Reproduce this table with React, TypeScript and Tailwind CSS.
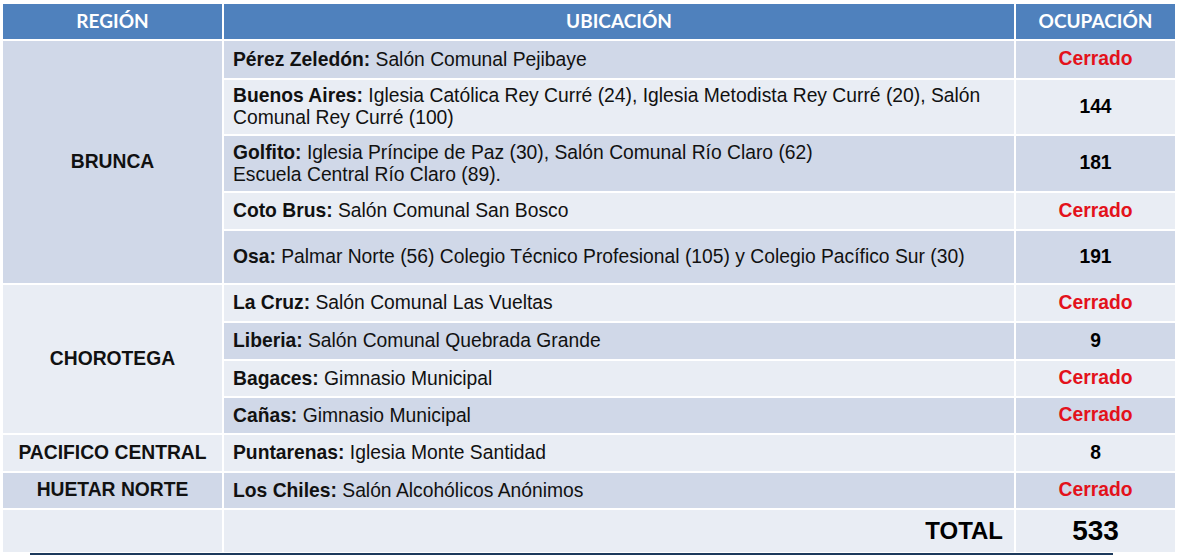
import React from 'react';

type Row = { label: string; text: string; text2?: string; value: string; h: string };

const rows: Row[] = [
  { label: 'Pérez Zeledón:', text: 'Salón Comunal Pejibaye', value: 'Cerrado', h: 'h-[37px]' },
  {
    label: 'Buenos Aires:',
    text: 'Iglesia Católica Rey Curré (24), Iglesia Metodista Rey Curré (20), Salón Comunal Rey Curré (100)',
    value: '144',
    h: 'h-[54px]',
  },
  {
    label: 'Golfito:',
    text: 'Iglesia Príncipe de Paz (30), Salón Comunal Río Claro (62)',
    text2: 'Escuela Central Río Claro (89).',
    value: '181',
    h: 'h-[55px]',
  },
  { label: 'Coto Brus:', text: 'Salón Comunal San Bosco', value: 'Cerrado', h: 'h-[36px]' },
  {
    label: 'Osa:',
    text: 'Palmar Norte (56) Colegio Técnico Profesional (105) y Colegio Pacífico Sur (30)',
    value: '191',
    h: 'h-[52px]',
  },
  { label: 'La Cruz:', text: 'Salón Comunal Las Vueltas', value: 'Cerrado', h: 'h-[36px]' },
  { label: 'Liberia:', text: 'Salón Comunal Quebrada Grande', value: '9', h: 'h-[36px]' },
  { label: 'Bagaces:', text: 'Gimnasio Municipal', value: 'Cerrado', h: 'h-[35px]' },
  { label: 'Cañas:', text: 'Gimnasio Municipal', value: 'Cerrado', h: 'h-[35px]' },
  { label: 'Puntarenas:', text: 'Iglesia Monte Santidad', value: '8', h: 'h-[36px]' },
  { label: 'Los Chiles:', text: 'Salón Alcohólicos Anónimos', value: 'Cerrado', h: 'h-[35px]' },
];

const dark = 'bg-[#d0d8e8]';
const light = 'bg-[#e9edf4]';

function Value({ v }: { v: string }) {
  const closed = v === 'Cerrado';
  return (
    <span className={closed ? 'text-[#e3121b] font-bold' : 'text-black font-bold'}>{v}</span>
  );
}

export default function App() {
  return (
    <div className="min-h-screen bg-white pt-[4px] pl-[3px] font-['Liberation_Sans',Arial,sans-serif] text-[19.3px] text-[#111]">
      <div className="grid grid-cols-[219px_790px_159px] gap-[2px] w-[1172px]">
        {/* Header */}
        <div className="h-[35px] bg-[#4f81bd] flex items-center justify-center text-white font-bold text-[19px] font-['Lato',sans-serif]">
          REGIÓN
        </div>
        <div className="h-[35px] bg-[#4f81bd] flex items-center justify-center text-white font-bold text-[19px] font-['Lato',sans-serif]">
          UBICACIÓN
        </div>
        <div className="h-[35px] bg-[#4f81bd] flex items-center justify-center text-white font-bold text-[19px] font-['Lato',sans-serif]">
          OCUPACIÓN
        </div>

        {/* Region cells */}
        <div className={`${dark} row-start-2 row-span-5 col-start-1 flex items-center justify-center font-bold`}>
          BRUNCA
        </div>
        <div className={`${light} row-start-7 row-span-4 col-start-1 flex items-center justify-center font-bold`}>
          CHOROTEGA
        </div>
        <div className={`${light} row-start-11 col-start-1 flex items-center justify-center font-bold`}>
          PACIFICO CENTRAL
        </div>
        <div className={`${dark} row-start-12 col-start-1 flex items-center justify-center font-bold`}>
          HUETAR NORTE
        </div>

        {rows.map((r, i) => {
          const bg = i % 2 === 0 ? dark : light;
          return (
            <React.Fragment key={r.label}>
              <div className={`${bg} ${r.h} col-start-2 flex flex-col justify-center pl-[9px] pr-[15px] leading-[22px]`}>
                <div>
                  <span className="font-bold">{r.label}</span> {r.text}
                </div>
                {r.text2 && <div>{r.text2}</div>}
              </div>
              <div className={`${bg} ${r.h} col-start-3 flex items-center justify-center`}>
                <Value v={r.value} />
              </div>
            </React.Fragment>
          );
        })}

        {/* Total */}
        <div className={`${light} h-[42px] col-start-1`} />
        <div className={`${light} h-[42px] col-start-2 flex items-center justify-end pr-[11px] font-bold text-[24px] text-black`}>
          TOTAL
        </div>
        <div className={`${light} h-[42px] col-start-3 flex items-center justify-center font-bold text-[28px] text-black`}>
          533
        </div>
      </div>
      <div className="ml-[27px] mt-[1px] w-[1083px] h-[3px] bg-[#1d3a5c]" />
    </div>
  );
}
